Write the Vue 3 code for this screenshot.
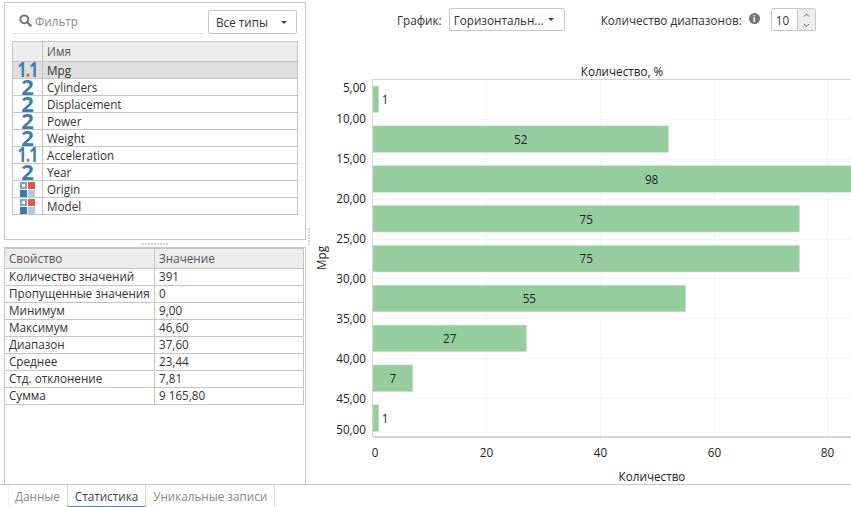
<script setup>
const fields = [
  { name: 'Mpg', type: 'float', selected: true },
  { name: 'Cylinders', type: 'int' },
  { name: 'Displacement', type: 'int' },
  { name: 'Power', type: 'int' },
  { name: 'Weight', type: 'int' },
  { name: 'Acceleration', type: 'float' },
  { name: 'Year', type: 'int' },
  { name: 'Origin', type: 'cat' },
  { name: 'Model', type: 'cat' },
]
const stats = [
  ['Количество значений', '391'],
  ['Пропущенные значения', '0'],
  ['Минимум', '9,00'],
  ['Максимум', '46,60'],
  ['Диапазон', '37,60'],
  ['Среднее', '23,44'],
  ['Стд. отклонение', '7,81'],
  ['Сумма', '9 165,80'],
]
const counts = [1, 52, 98, 75, 75, 55, 27, 7, 1]
const x0 = 373
const unit = 5.685
const bars = counts.map((v, i) => ({
  v,
  y: 86 + i * 39.85,
  w: v * unit,
  small: v < 5,
}))
const yLabels = [
  ['5,00', 87], ['10,00', 118], ['15,00', 158], ['20,00', 198], ['25,00', 238],
  ['30,00', 278], ['35,00', 318], ['40,00', 358], ['45,00', 398], ['50,00', 429],
]
const hGrid = [119.5, 159.5, 199.5, 239.5, 278.5, 318.5, 358.5, 398.5]
const xTicks = [[0, 373.5], [20, 486.5], [40, 600.5], [60, 714.5], [80, 827.5]]
</script>

<template>
  <div class="app">
    <div class="main">
      <div class="left">
        <section class="panel fields">
          <div class="filter-row">
            <div class="filter">
              <svg class="search" width="13" height="13" viewBox="0 0 13 13">
                <circle cx="5.3" cy="5.3" r="3.9" fill="none" stroke="#757575" stroke-width="2" />
                <path d="M8.2 8.2 L11.6 11.6" stroke="#757575" stroke-width="2.4" stroke-linecap="round" />
              </svg>
              <span>Фильтр</span>
            </div>
            <div class="select types"><span>Все типы</span><i class="caret"></i></div>
          </div>
          <div class="grid field-grid">
            <div class="row head">
              <div class="icon-cell"></div>
              <div class="name-cell">Имя</div>
            </div>
            <div v-for="f in fields" :key="f.name" class="row" :class="{ selected: f.selected }">
              <div class="icon-cell">
                <span v-if="f.type === 'float'" class="num float">1<b>.</b>1</span>
                <span v-else-if="f.type === 'int'" class="num">2</span>
                <span v-else class="cat">
                  <i class="sq outline"></i><i class="sq red"></i><i class="sq blue"></i><i class="sq pale"></i>
                </span>
              </div>
              <div class="name-cell">{{ f.name }}</div>
            </div>
          </div>
        </section>
        <div class="h-split"><i v-for="n in 9" :key="n"></i></div>
        <section class="panel stats">
          <div class="grid stat-grid">
            <div class="row head">
              <div class="prop">Свойство</div>
              <div class="val">Значение</div>
            </div>
            <div v-for="s in stats" :key="s[0]" class="row">
              <div class="prop">{{ s[0] }}</div>
              <div class="val">{{ s[1] }}</div>
            </div>
          </div>
        </section>
      </div>
      <div class="v-split"><i v-for="n in 6" :key="n"></i></div>
      <div class="right">
        <div class="toolbar">
          <label class="lbl chart-lbl">График:</label>
          <div class="select chart-type"><span>Горизонтальн...</span><i class="caret"></i></div>
          <label class="lbl bins-lbl">Количество диапазонов:</label>
          <span class="info">i</span>
          <div class="spinner">
            <span class="spin-val">10</span>
            <div class="spin-btn">
              <svg width="9" height="22" viewBox="0 0 9 22">
                <path d="M2 7.5 L4.5 5 L7 7.5" fill="none" stroke="#666" stroke-width="1" />
                <path d="M2 15 L4.5 17.5 L7 15" fill="none" stroke="#666" stroke-width="1" />
              </svg>
            </div>
          </div>
        </div>
        <svg class="chart" width="540" height="442" viewBox="311 42 540 442">
          <text class="t" x="622" y="76" text-anchor="middle">Количество, %</text>
          <line v-for="y in hGrid" :key="y" class="gridline" x1="373" x2="851" :y1="y" :y2="y" />
          <line v-for="t in xTicks.slice(1)" :key="t[0]" class="gridline" :x1="t[1]" :x2="t[1]" y1="80" y2="442" />
          <rect v-for="(b, i) in bars" :key="i" class="bar" :x="x0" :y="b.y" :width="b.w" height="26.5" />
          <text v-for="(b, i) in bars" :key="'v' + i" class="t"
            :x="b.small ? x0 + 12 : x0 + b.w / 2" :y="b.y + 18" text-anchor="middle">{{ b.v }}</text>
          <line class="axis" x1="373" x2="851" y1="79.5" y2="79.5" />
          <line class="axis" x1="372.5" x2="372.5" y1="79" y2="437" />
          <line class="axis thick" x1="373" x2="851" y1="437" y2="437" />
          <text v-for="l in yLabels" :key="l[0]" class="t" x="366" :y="l[1] + 4.5" text-anchor="end">{{ l[0] }}</text>
          <text v-for="t in xTicks" :key="'x' + t[0]" class="t"
            :x="t[0] === 0 ? 375 : t[1]" y="456.5" text-anchor="middle">{{ t[0] }}</text>
          <text class="t" x="652" y="480.5" text-anchor="middle">Количество</text>
          <text class="t" text-anchor="middle" transform="translate(326 258) rotate(-90)">Mpg</text>
        </svg>
      </div>
    </div>
    <div class="tabs">
      <div class="tab">Данные</div>
      <div class="tab active">Статистика</div>
      <div class="tab">Уникальные записи</div>
    </div>
  </div>
</template>

<style>
html, body { margin: 0; background: #fff; }
</style>

<style scoped>
.app {
  width: 851px;
  height: 507px;
  overflow: hidden;
  display: flex;
  flex-direction: column;
  font-family: "Open Sans", "Liberation Sans", sans-serif;
  font-size: 11.7px;
  color: #333;
  background: #fff;
}
.main {
  height: 484px;
  display: flex;
  box-sizing: border-box;
}
.left {
  width: 302px;
  margin-left: 4px;
  padding-top: 2px;
  display: flex;
  flex-direction: column;
  flex: none;
}
.panel {
  box-sizing: border-box;
  border: 1px solid #c8c8c8;
  width: 302px;
}
.fields { height: 238px; padding: 7px 7px 0 7px; }
.stats { height: 237px; border-bottom: 0; }
.h-split {
  height: 7px;
  display: flex;
  justify-content: center;
  align-items: center;
  gap: 1px;
}
.h-split i { width: 2px; height: 2px; background: #d4d4d4; }
.v-split {
  width: 5px;
  flex: none;
  display: flex;
  flex-direction: column;
  gap: 1px;
  padding: 228px 0 0 2px;
  box-sizing: border-box;
}
.v-split i { width: 2px; height: 2px; background: #d4d4d4; }
.filter-row { display: flex; gap: 4px; height: 24px; }
.filter {
  width: 192px;
  box-sizing: border-box;
  border-bottom: 1px solid #e6e6e6;
  display: flex;
  align-items: center;
  gap: 3px;
  padding: 0 0 2px 7px;
  color: #8a8a8a;
  height: 24px;
}
.select {
  box-sizing: border-box;
  border: 1px solid #c8c8c8;
  border-radius: 2px;
  display: flex;
  align-items: center;
  justify-content: space-between;
  background: #fff;
}
.types { width: 89px; height: 24px; padding: 0 9px 0 7px; }
.caret {
  flex: none;
  width: 0;
  height: 0;
  border-left: 3px solid transparent;
  border-right: 3px solid transparent;
  border-top: 3px solid #444;
}
.grid { box-sizing: border-box; }
.field-grid {
  width: 286px;
  margin-top: 7px;
  border: 1px solid #c4c4c4;
  border-bottom: 0;
}
.row { display: flex; box-sizing: border-box; height: 17px; border-bottom: 1px solid #c4c4c4; line-height: 16px; }
.row.head { background: #ededed; color: #555; height: 20px; line-height: 18px; }
.row.selected { background: #dedede; }
.icon-cell {
  width: 30px;
  flex: none;
  box-sizing: border-box;
  border-right: 1px solid #c4c4c4;
  display: flex;
  justify-content: center;
  overflow: hidden;
}
.name-cell { padding-left: 4px; white-space: nowrap; }
.num {
  display: inline-block;
  font-family: "Open Sans", sans-serif;
  font-weight: 700;
  font-size: 22px;
  line-height: 14px;
  height: 16px;
  color: #3f7eaa;
}
.num.float {
  font-size: 21px;
  letter-spacing: -1px;
  white-space: nowrap;
  transform: scaleX(0.74);
}
.num.float b { color: #e0514a; font-weight: 700; }
.cat {
  width: 15px;
  display: grid;
  grid-template-columns: 7px 7px;
  grid-auto-rows: 7px;
  gap: 1px;
  margin-top: 1px;
}
.sq { display: block; box-sizing: border-box; }
.sq.outline { border: 2px solid #7fa7c2; }
.sq.red { background: #e2534d; }
.sq.blue { background: #3b7ca8; }
.sq.pale { background: #afcbdf; }
.stat-grid { width: 299px; border-right: 1px solid #c4c4c4; }
.stat-grid .row { line-height: 15px; }
.stat-grid .row.head { height: 21px; line-height: 18px; border-top: 1px solid #c4c4c4; }
.prop {
  width: 150px;
  flex: none;
  box-sizing: border-box;
  border-right: 1px solid #c4c4c4;
  padding-left: 4px;
  white-space: nowrap;
}
.val { padding-left: 4px; }
.right { flex: 1; min-width: 0; display: flex; flex-direction: column; }
.toolbar {
  height: 42px;
  box-sizing: border-box;
  display: flex;
  align-items: flex-start;
  padding: 8px 0 0 86px;
}
.lbl { line-height: 24px; white-space: nowrap; }
.chart-type { width: 116px; height: 23px; margin-left: 7px; padding: 0 10px 0 4px; white-space: nowrap; }
.bins-lbl { margin-left: 36px; }
.info {
  width: 11px;
  height: 11px;
  border-radius: 50%;
  background: #757575;
  color: #fff;
  font: 700 9px/11px "Open Sans", sans-serif;
  text-align: center;
  margin: 5px 11px 0 7px;
}
.spinner {
  width: 45px;
  height: 23px;
  box-sizing: border-box;
  border: 1px solid #c8c8c8;
  border-radius: 2px;
  display: flex;
}
.spin-val { width: 25px; box-sizing: border-box; padding-left: 4px; line-height: 22px; }
.spin-btn {
  flex: 1;
  background: #ededed;
  border-left: 1px solid #c8c8c8;
  display: flex;
  justify-content: center;
}
.chart { display: block; flex: none; }
.t { font-family: "Open Sans", sans-serif; font-size: 11.7px; fill: #222; }
.gridline { stroke: #f5f5f5; stroke-width: 1; }
.bar { fill: #96cd9e; stroke: #c4e3c8; stroke-width: 0.5; }
.axis { stroke: #d4d4d4; stroke-width: 1; }
.axis.thick { stroke-width: 2; }
.tabs {
  height: 23px;
  box-sizing: border-box;
  border-top: 1px solid #c8c8c8;
  display: flex;
  padding-left: 8px;
}
.tab {
  box-sizing: border-box;
  height: 22px;
  padding: 0 7px;
  line-height: 23px;
  color: #8a8a8a;
  border-right: 1px solid #e4e4e4;
}
.tab:first-child { border-left: 1px solid #f0f0f0; padding-left: 6px; }
.tab.active {
  color: #444;
  border-right: 1px solid #d6d6d6;
  border-left: 1px solid #d6d6d6;
  border-bottom: 1px solid #4c8dbd;
  margin-left: -1px;
}
</style>
